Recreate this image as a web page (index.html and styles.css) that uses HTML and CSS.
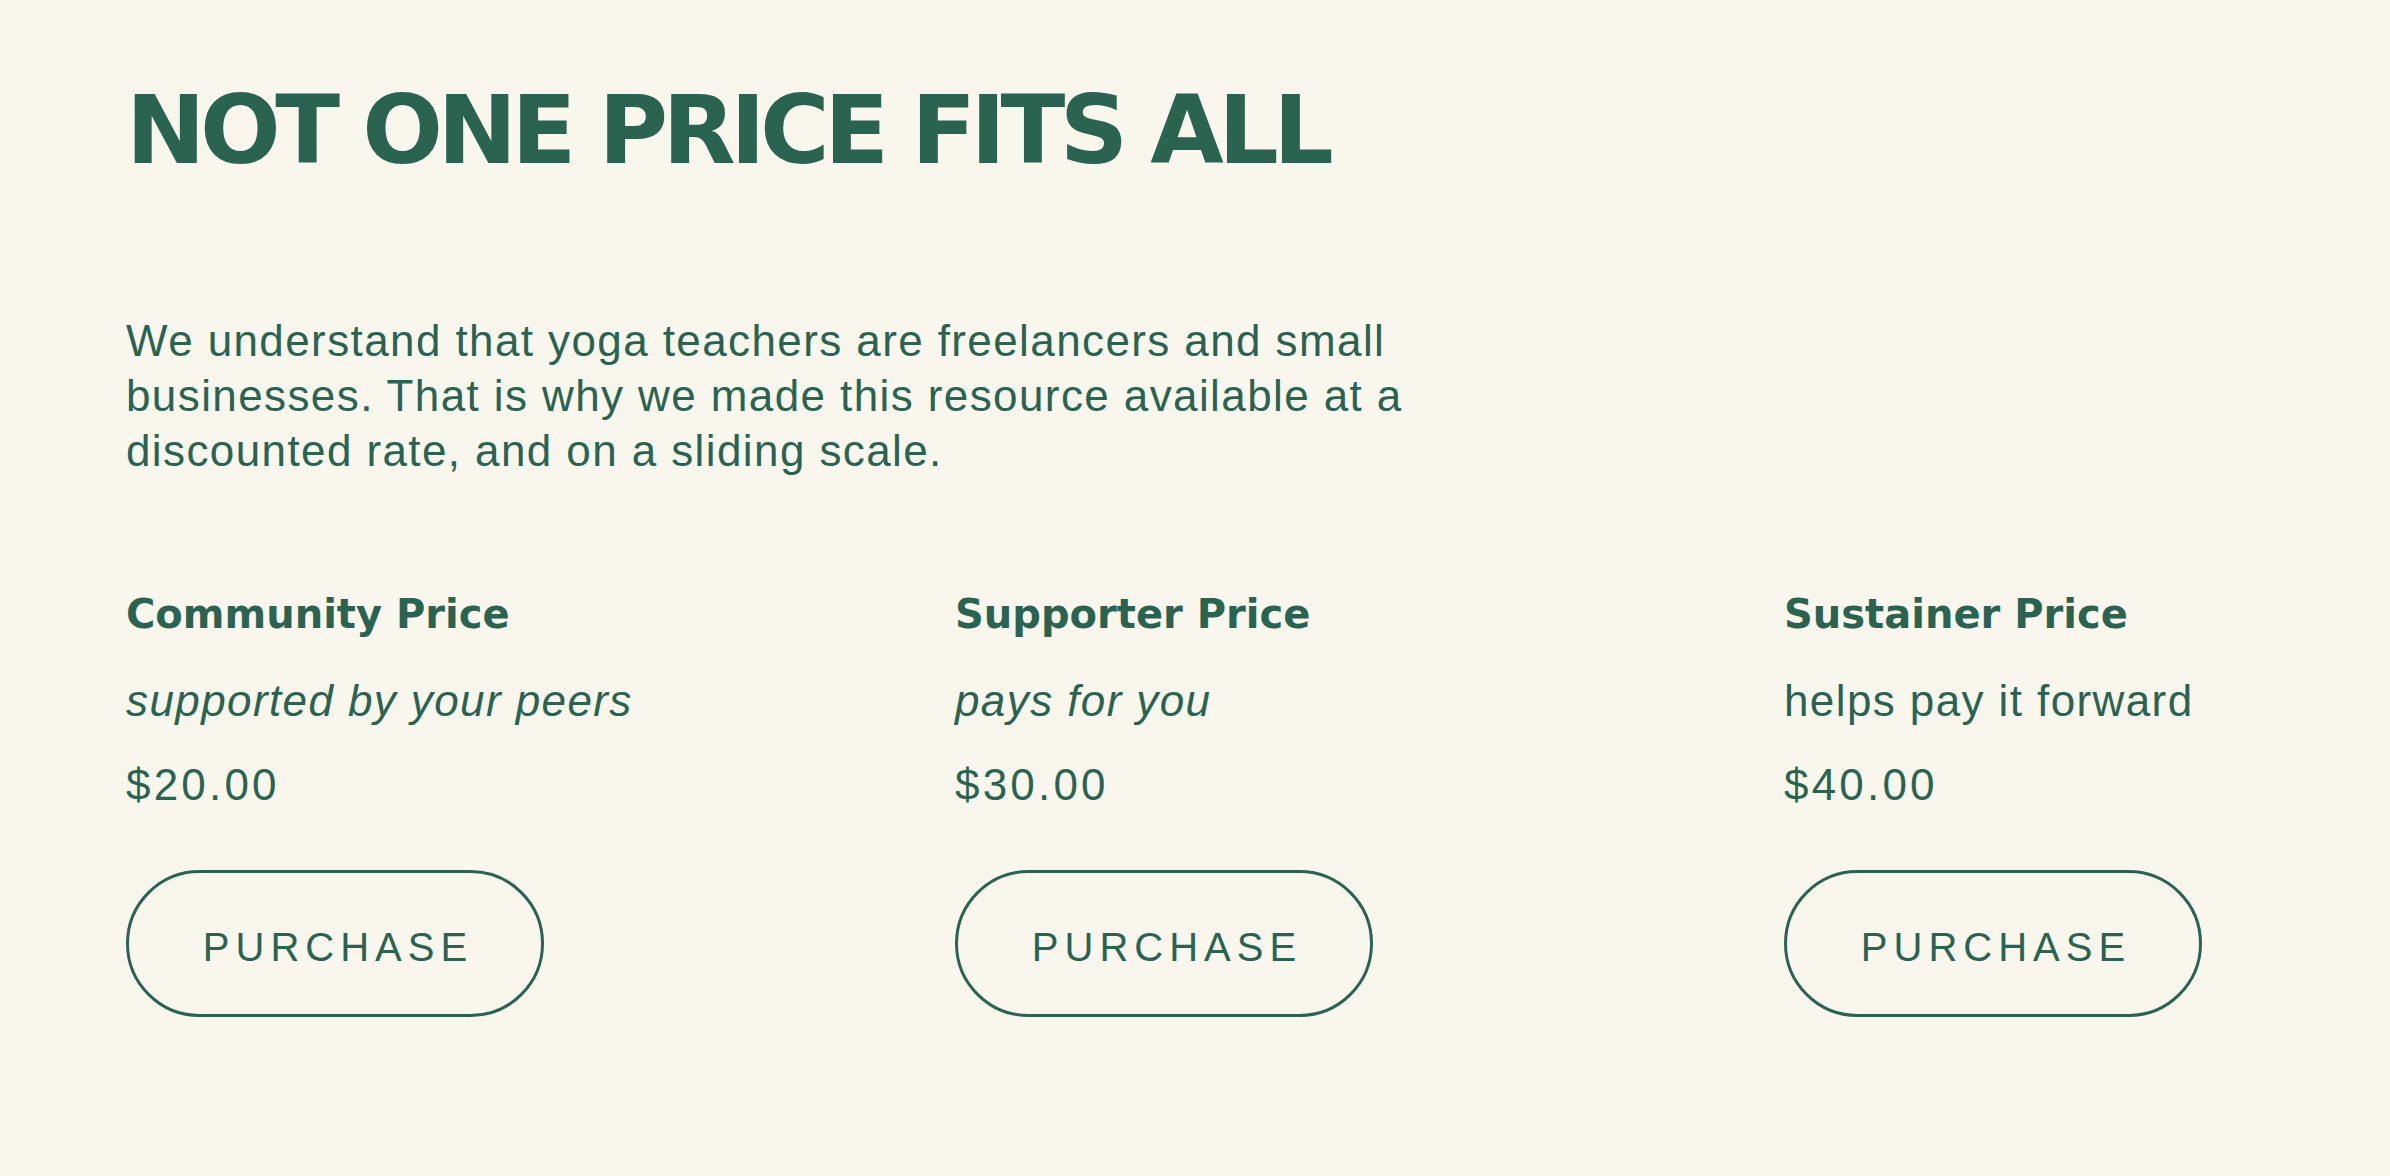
FILE: index.html
```html
<!DOCTYPE html>
<html lang="en">
<head>
<meta charset="utf-8">
<title>Not One Price Fits All</title>
<link rel="stylesheet" href="styles.css">
</head>
<body>
<main class="page">
  <h1 class="heading">NOT ONE PRICE FITS ALL</h1>
  <p class="intro">We understand that yoga teachers are freelancers and small<br>businesses. That is why we made this resource available at a<br>discounted rate, and on a sliding scale.</p>
  <section class="tiers">
    <div class="tier">
      <h2 class="tier-title">Community Price</h2>
      <p class="tier-sub tier-sub-italic">supported by your peers</p>
      <p class="tier-price">$20.00</p>
      <a class="btn" href="#">PURCHASE</a>
    </div>
    <div class="tier">
      <h2 class="tier-title">Supporter Price</h2>
      <p class="tier-sub tier-sub-italic">pays for you</p>
      <p class="tier-price">$30.00</p>
      <a class="btn" href="#">PURCHASE</a>
    </div>
    <div class="tier">
      <h2 class="tier-title">Sustainer Price</h2>
      <p class="tier-sub">helps pay it forward</p>
      <p class="tier-price">$40.00</p>
      <a class="btn" href="#">PURCHASE</a>
    </div>
  </section>
</main>
</body>
</html>
```

FILE: styles.css
```css
html, body {
  margin: 0;
  padding: 0;
  background: #f9f6ee;
}

body {
  color: #2b6351;
  font-family: "Liberation Sans", Arial, sans-serif;
}

.page {
  padding: 83px 0 0 126px;
  box-sizing: border-box;
  min-height: 1176px;
}

.heading {
  margin: 0;
  font-family: "DejaVu Sans", sans-serif;
  font-weight: 700;
  font-size: 95px;
  line-height: 95px;
  letter-spacing: -5.5px;
  white-space: nowrap;
}

.intro {
  margin: 135px 0 0;
  font-size: 44px;
  line-height: 55px;
  letter-spacing: 1.4px;
  white-space: nowrap;
}

.tiers {
  margin-top: 112px;
  display: grid;
  grid-template-columns: repeat(3, 600px);
  column-gap: 229px;
}

.tier {
  display: flex;
  flex-direction: column;
  align-items: flex-start;
}

.tier-title {
  margin: 0;
  font-family: "DejaVu Sans", sans-serif;
  font-weight: 700;
  font-size: 40px;
  line-height: 48px;
  white-space: nowrap;
}

.tier-sub {
  margin: 35px 0 0;
  font-size: 44px;
  line-height: 55px;
  letter-spacing: 1.4px;
  white-space: nowrap;
}

.tier-sub-italic {
  font-style: italic;
}

.tier-price {
  margin: 29px 0 0;
  font-size: 44px;
  line-height: 55px;
  letter-spacing: 3.2px;
}

.btn {
  margin-top: 58px;
  box-sizing: border-box;
  width: 418px;
  height: 147px;
  border: 3px solid #2b6351;
  border-radius: 74px;
  display: flex;
  align-items: center;
  justify-content: center;
  color: #2b6351;
  text-decoration: none;
  font-size: 40px;
  letter-spacing: 6px;
  padding: 8px 0 0 6px;
}
```
